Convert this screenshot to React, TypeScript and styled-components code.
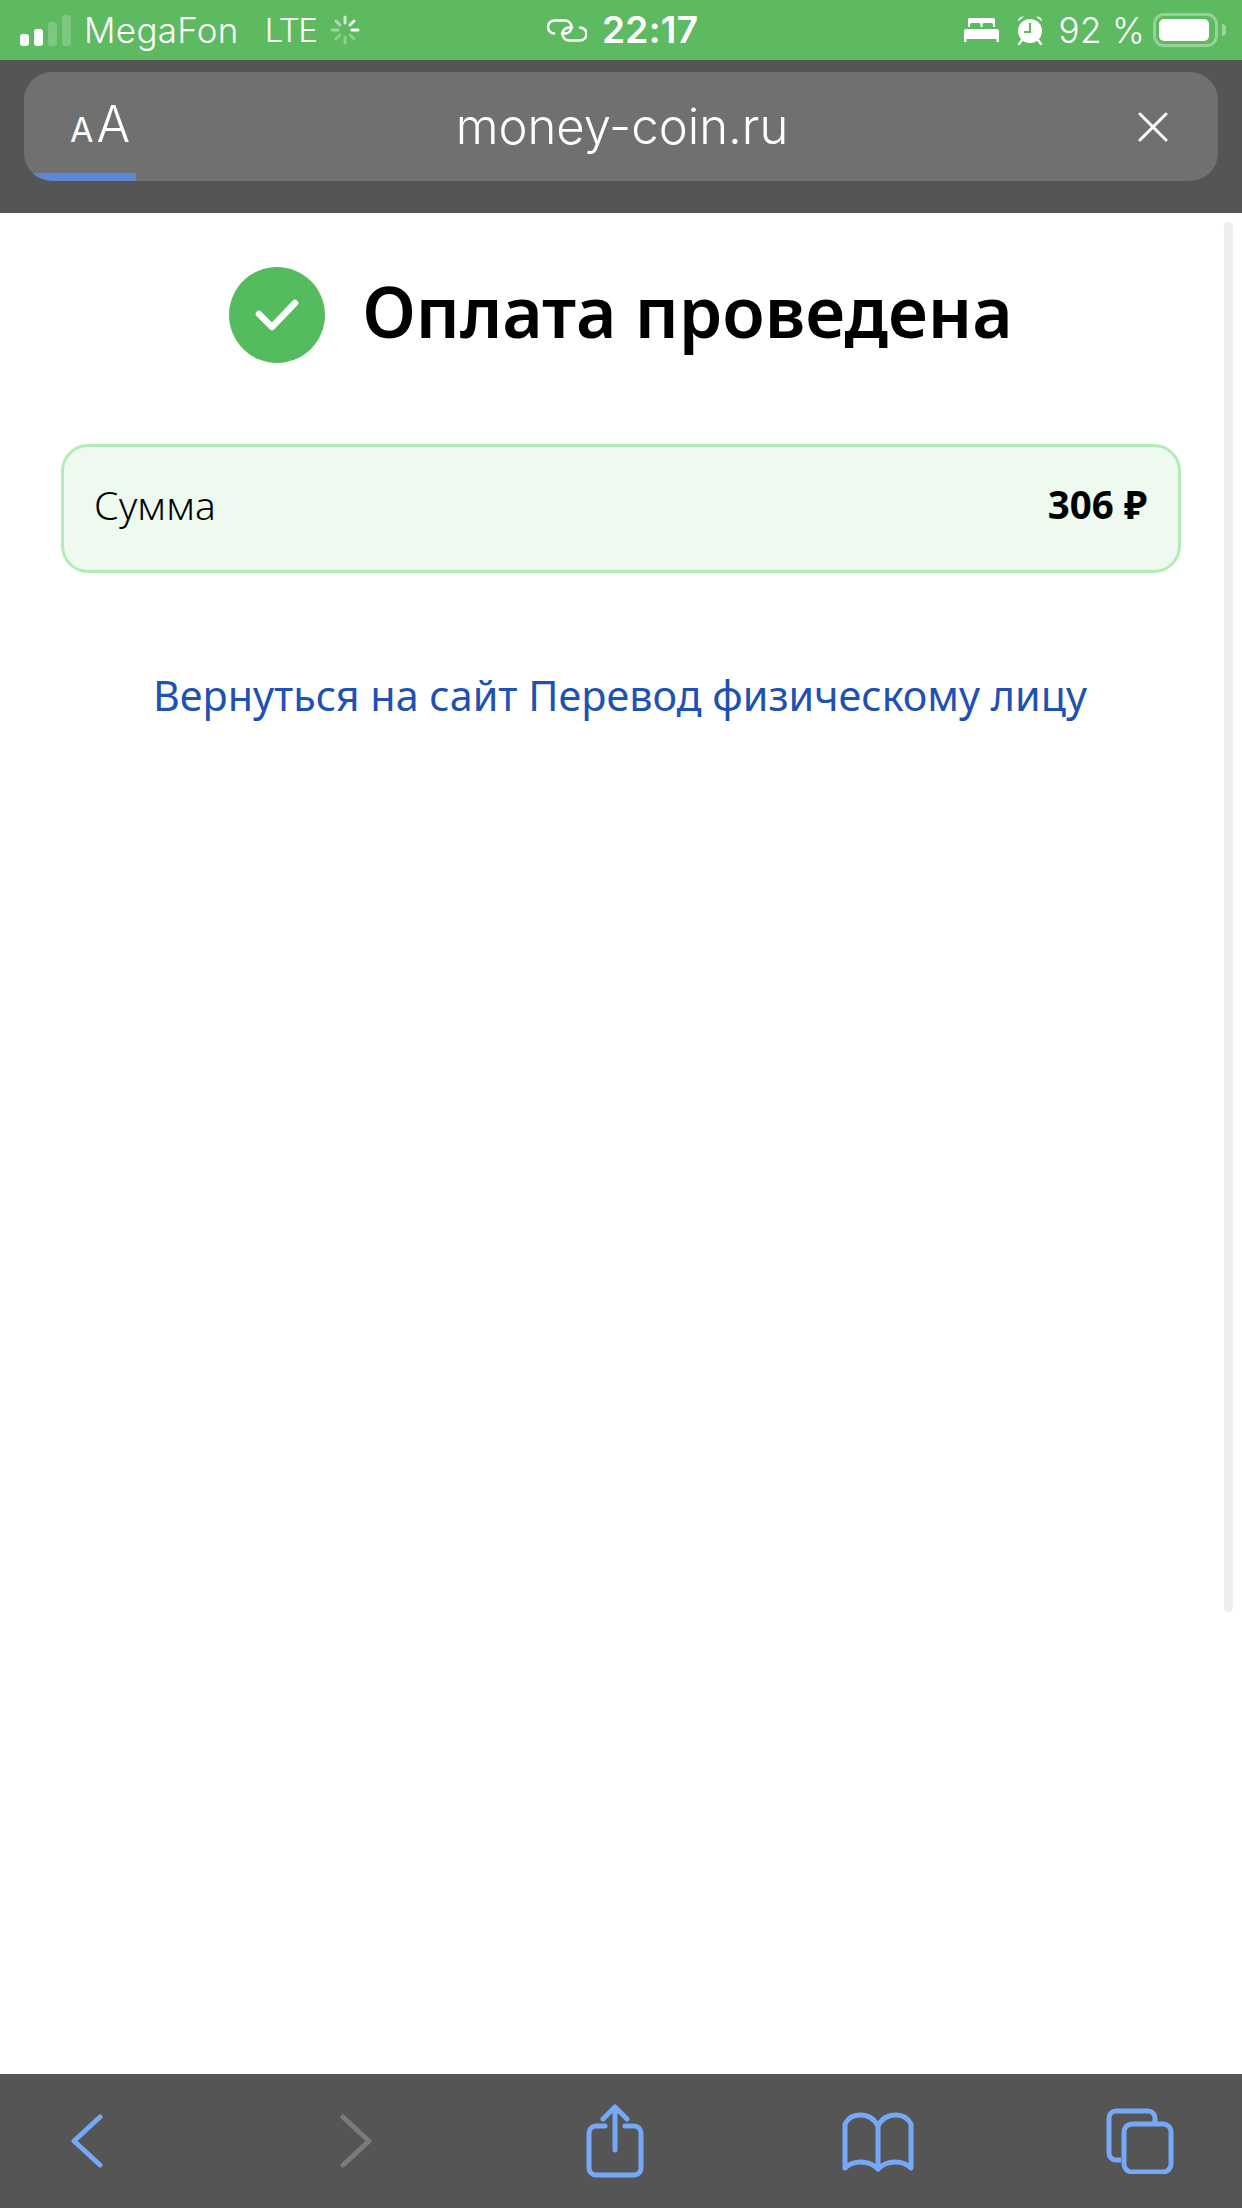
import React from 'react'
import styled, { createGlobalStyle } from 'styled-components'

const GlobalStyle = createGlobalStyle`
  html, body {
    margin: 0;
    padding: 0;
    background: #fff;
  }
  * {
    box-sizing: border-box;
  }
`

const Page = styled.div`
  position: relative;
  width: 1242px;
  height: 2208px;
  display: flex;
  flex-direction: column;
  overflow: hidden;
  background: #fff;
  font-family: Inter, "Noto Sans", sans-serif;
`

const StatusBar = styled.div`
  height: 60px;
  flex: none;
  padding: 0 16px 0 20px;
  display: grid;
  grid-template-columns: 527px auto 1fr;
  align-items: center;
  background: #5dba61;
  color: #fff;
`

const StatusGroup = styled.div<{ $end?: boolean }>`
  display: flex;
  align-items: center;
  justify-content: ${p => (p.$end ? 'flex-end' : 'flex-start')};
`

const Signal = styled.div`
  display: flex;
  align-items: flex-end;
  gap: 5px;
  height: 31px;
  margin-right: 13px;
`

const SignalBar = styled.span<{ $h: number; $dim?: boolean }>`
  width: 9px;
  height: ${p => p.$h}px;
  border-radius: 3px;
  background: ${p => (p.$dim ? 'rgba(255,255,255,.2)' : '#fff')};
`

const StatusText = styled.span<{ $gap?: number; $bold?: boolean; $tight?: boolean }>`
  font-size: ${p => (p.$bold ? 37 : p.$tight ? 33 : 35)}px;
  line-height: 40px;
  font-weight: ${p => (p.$bold ? 600 : 300)};
  letter-spacing: ${p => (p.$tight ? -1.5 : 0.3)}px;
  margin-right: ${p => p.$gap ?? 0}px;
  white-space: nowrap;
`

const Battery = styled.div`
  width: 65px;
  height: 34px;
  margin-left: 8px;
  padding: 3px;
  border: 3px solid rgba(255, 255, 255, .35);
  border-radius: 11px;
  display: flex;
  position: relative;
  &::after {
    content: '';
    position: absolute;
    right: -11px;
    top: 8px;
    width: 4px;
    height: 12px;
    border-radius: 0 4px 4px 0;
    background: rgba(255, 255, 255, .4);
  }
`

const BatteryFill = styled.span`
  width: 50px;
  height: 22px;
  border-radius: 5px;
  background: #fff;
`

const BatteryNubSpace = styled.span`
  width: 8px;
`

const Header = styled.div`
  height: 153px;
  flex: none;
  padding: 12px 24px 32px;
  background: #555;
`

const UrlPill = styled.div`
  position: relative;
  height: 109px;
  border-radius: 28px;
  padding: 0 50px 0 46px;
  display: grid;
  grid-template-columns: 1fr auto 1fr;
  align-items: center;
  overflow: hidden;
  background: #707070;
  color: #fff;
`

const Progress = styled.div`
  position: absolute;
  left: 0;
  bottom: 0;
  width: 112px;
  height: 8px;
  background: #5b87d6;
`

const TextSize = styled.div`
  display: flex;
  align-items: baseline;
  gap: 3px;
  font-weight: 400;
`

const SmallA = styled.span`
  font-size: 34px;
  line-height: 50px;
`

const BigA = styled.span`
  font-size: 50px;
  line-height: 50px;
  font-weight: 300;
`

const UrlText = styled.div`
  margin-left: 6px;
  font-size: 49px;
  line-height: 60px;
  font-weight: 300;
  white-space: nowrap;
`

const CloseButton = styled.div`
  justify-self: end;
  display: flex;
`

const Content = styled.div`
  flex: 1;
  padding: 54px 61px 0;
  display: flex;
  flex-direction: column;
  font-family: "Noto Sans", sans-serif;
`

const TitleRow = styled.div`
  display: flex;
  align-items: center;
  justify-content: center;
  gap: 37px;
  height: 96px;
`

const CheckCircle = styled.div`
  width: 96px;
  height: 96px;
  border-radius: 50%;
  flex: none;
  display: flex;
  align-items: center;
  justify-content: center;
  background: #54bc5e;
`

const Title = styled.h1`
  margin: 0 0 8px;
  font-size: 69.6px;
  line-height: 88px;
  font-weight: 600;
  color: #000;
  white-space: nowrap;
`

const SumCard = styled.div`
  margin-top: 81px;
  height: 129px;
  padding: 0 31px 9px 30px;
  display: flex;
  align-items: center;
  justify-content: space-between;
  border: 3px solid #b5ebb6;
  border-radius: 27px;
  background: #eef9ef;
  color: #000;
`

const SumLabel = styled.span`
  font-size: 39px;
  font-weight: 300;
`

const SumValue = styled.span`
  font-size: 38.500px;
  font-weight: 700;
`

const BackLink = styled.a`
  margin: 95px 2px 0 0;
  text-align: center;
  font-size: 41.300px;
  line-height: 54px;
  font-weight: 400;
  color: #1f51b5;
  white-space: nowrap;
`

const Scrollbar = styled.div`
  position: absolute;
  right: 9px;
  top: 222px;
  width: 9px;
  height: 1390px;
  border-radius: 5px;
  background: #eee;
`

const Toolbar = styled.div`
  height: 134px;
  flex: none;
  padding: 0 0 0 71px;
  display: flex;
  align-items: flex-start;
  background: #555;
`

const ToolButton = styled.div<{ $top: number; $left?: number }>`
  margin-top: ${p => p.$top}px;
  margin-left: ${p => p.$left ?? 0}px;
  display: flex;
`

const BLUE = '#75a8f7'

const App = () => {
  return (
    <Page>
      <GlobalStyle />
      <StatusBar>
        <StatusGroup>
          <Signal>
            <SignalBar $h={12} />
            <SignalBar $h={17} />
            <SignalBar $h={24} $dim />
            <SignalBar $h={31} $dim />
          </Signal>
          <StatusText $gap={26}>MegaFon</StatusText>
          <StatusText $gap={14} $tight>LTE</StatusText>
          <svg width="30" height="30" viewBox="0 0 30 30" stroke="#fff" strokeWidth="3" strokeLinecap="round">
            <path d="M15 2v6" opacity=".7" />
            <path d="M24 6l-4 4" opacity=".85" />
            <path d="M28 15h-6" opacity="1" />
            <path d="M24 24l-4-4" opacity=".3" />
            <path d="M15 28v-6" opacity=".3" />
            <path d="M6 24l4-4" opacity=".3" />
            <path d="M2 15h6" opacity=".4" />
            <path d="M6 6l4 4" opacity=".5" />
          </svg>
        </StatusGroup>
        <StatusGroup>
          <svg width="40" height="23" viewBox="0 0 40 23" fill="none" stroke="#fff" strokeWidth="2.600" strokeLinecap="round" style={{ marginRight: 15 }}>
            <path d="M7 14.500A6.500 6.500 0 0 1 8 1.500h10a6.500 6.500 0 0 1 0 13h-3" />
            <path d="M33 8.500a6.500 6.500 0 0 1 0 13H22a6.500 6.500 0 0 1 0-13h3" />
          </svg>
          <StatusText $bold>22:17</StatusText>
        </StatusGroup>
        <StatusGroup $end>
          <svg width="35" height="24" viewBox="0 0 35 24" fill="#fff" style={{ marginRight: 18 }}>
            <path d="M4 1.500A1.500 1.500 0 0 1 5.500 0h24A1.500 1.500 0 0 1 31 1.500V9h-2V6.500A1.500 1.500 0 0 0 27.500 5H20a1.500 1.500 0 0 0-1.500 1.500V9h-2V6.500A1.500 1.500 0 0 0 15 5H7.500A1.500 1.500 0 0 0 6 6.500V9H4z" />
            <path d="M2 11h31a2 2 0 0 1 2 2v11h-2.500v-3h-30v3H0V13a2 2 0 0 1 2-2z" />
          </svg>
          <svg width="26" height="30" viewBox="0 0 26 30" style={{ marginRight: 16 }}>
            <circle cx="13" cy="16" r="12" fill="#fff" />
            <path d="M1 6.500A5 5 0 0 1 7 1.500zM25 6.500A5 5 0 0 0 19 1.500z" fill="#fff" />
            <path d="M5 25l-3 4M21 25l3 4" stroke="#fff" strokeWidth="2.400" strokeLinecap="round" />
            <path d="M13 8v9H7" fill="none" stroke="#5dba61" strokeWidth="2.200" />
          </svg>
          <StatusText>92 %</StatusText>
          <Battery>
            <BatteryFill />
          </Battery>
          <BatteryNubSpace />
        </StatusGroup>
      </StatusBar>

      <Header>
        <UrlPill>
          <TextSize>
            <SmallA>A</SmallA>
            <BigA>A</BigA>
          </TextSize>
          <UrlText>money-coin.ru</UrlText>
          <CloseButton>
            <svg width="30" height="30" viewBox="0 0 30 30" stroke="#fff" strokeWidth="3" strokeLinecap="round">
              <path d="M2 2l26 26M28 2L2 28" />
            </svg>
          </CloseButton>
          <Progress />
        </UrlPill>
      </Header>

      <Content>
        <TitleRow>
          <CheckCircle>
            <svg width="44" height="32" viewBox="0 0 44 32" fill="none" stroke="#fff" strokeWidth="6.500" strokeLinecap="round" strokeLinejoin="round">
              <path d="M4 15l13 13L40 4" />
            </svg>
          </CheckCircle>
          <Title>Оплата проведена</Title>
        </TitleRow>
        <SumCard>
          <SumLabel>Сумма</SumLabel>
          <SumValue>306 ₽</SumValue>
        </SumCard>
        <BackLink>Вернуться на сайт Перевод физическому лицу</BackLink>
      </Content>
      <Scrollbar />

      <Toolbar>
        <ToolButton $top={40}>
          <svg width="32" height="54" viewBox="0 0 32 54" fill="none" stroke={BLUE} strokeWidth="5" strokeLinecap="round" strokeLinejoin="round">
            <path d="M29 3L3 27l26 24" />
          </svg>
        </ToolButton>
        <ToolButton $top={40} $left={237}>
          <svg width="32" height="54" viewBox="0 0 32 54" fill="none" stroke="#7b7b7b" strokeWidth="5" strokeLinecap="round" strokeLinejoin="round">
            <path d="M3 3l26 24L3 51" />
          </svg>
        </ToolButton>
        <ToolButton $top={30} $left={214}>
          <svg width="58" height="74" viewBox="0 0 58 74" fill="none" stroke={BLUE} strokeWidth="5" strokeLinecap="round" strokeLinejoin="round">
            <path d="M19 22H10a7 7 0 0 0-7 7v35a7 7 0 0 0 7 7h38a7 7 0 0 0 7-7V29a7 7 0 0 0-7-7h-9" />
            <path d="M29 46V3M17 15L29 3l12 12" />
          </svg>
        </ToolButton>
        <ToolButton $top={38} $left={198}>
          <svg width="72" height="60" viewBox="0 0 72 60" fill="none" stroke={BLUE} strokeWidth="5" strokeLinecap="round" strokeLinejoin="round">
            <path d="M36 57V14C32 6 25 3 18 3S6 6 3 12v44c5-5 11-6 16-6s12 2 17 7c5-5 12-7 17-7s11 1 16 6V12C66 6 61 3 54 3s-14 3-18 11" />
          </svg>
        </ToolButton>
        <ToolButton $top={34} $left={192}>
          <svg width="68" height="66" viewBox="0 0 68 66" fill="none" stroke={BLUE} strokeWidth="5" strokeLinejoin="round">
            <path d="M15 52H10a7 7 0 0 1-7-7V10a7 7 0 0 1 7-7h32a7 7 0 0 1 7 7v5" />
            <rect x="18" y="16" width="47" height="48" rx="8" />
          </svg>
        </ToolButton>
      </Toolbar>
    </Page>
  )
}

export default App
